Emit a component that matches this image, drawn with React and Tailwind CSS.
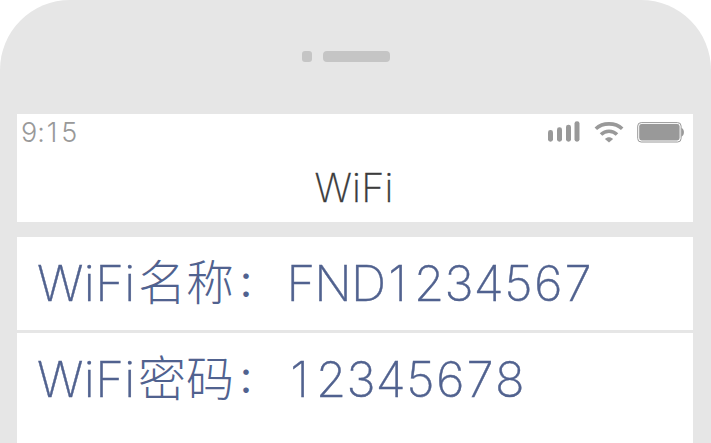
import React from "react";

const latin = "font-['Inter','Roboto',sans-serif]";
const cjk = "font-['Noto_Sans_CJK_SC',sans-serif]";

const cellWidth = {
  ":": "w-[0.27em]",
  "1": "w-[0.608em] pr-[0.07em]",
};

function Digits({ children }) {
  return (
    <span className="flex">
      {children.split("").map((c, i) => (
        <span key={i} className={`flex shrink-0 justify-center ${cellWidth[c] || "w-[0.608em]"}`}>
          {c}
        </span>
      ))}
    </span>
  );
}

function Signal() {
  return (
    <svg width="32" height="22" viewBox="0 0 32 22" fill="#999999">
      <rect x="0" y="9" width="5" height="11.7" rx="2.4" />
      <rect x="9" y="6.2" width="5" height="14.5" rx="2.4" />
      <rect x="18" y="3.7" width="5" height="17" rx="2.4" />
      <rect x="26.5" y="0.2" width="5" height="20.5" rx="2.4" />
    </svg>
  );
}

function Wifi() {
  return (
    <svg width="30" height="22" viewBox="0 0 30 22" fill="none" stroke="#999999" strokeWidth="3.6">
      <path d="M1.8 7.7C8.8 1.2 21.2 1.2 28.2 7.7" />
      <path d="M7 13.6C11.4 9.2 18.6 9.2 23 13.6" />
      <path d="M10.9 18C13.4 15.8 16.6 15.8 19.1 18L15 21.5Z" fill="#999999" stroke="none" />
    </svg>
  );
}

function Battery() {
  return (
    <svg width="48" height="22" viewBox="0 0 48 22">
      <rect x="0.7" y="1.6" width="43.4" height="19.4" rx="3.5" fill="none" stroke="#999999" strokeWidth="1" />
      <rect x="2.2" y="3.1" width="40.4" height="16.4" rx="2.4" fill="#999999" />
      <path d="M44.3 6.8C47.8 8.3 47.8 14.3 44.3 15.8Z" fill="#999999" />
    </svg>
  );
}

function Row({ label, prefix, digits }) {
  return (
    <div className="flex h-full items-center whitespace-nowrap pl-[20px] pt-[1px] text-[49px] leading-[60px] text-[#51628f]">
      <span className={`${latin} w-[101px] font-extralight tracking-[0.4px] [-webkit-text-stroke:0.4px]`}>WiFi</span>
      <span className={`${cjk} w-[97px] pb-[10px] text-[48px] font-light`}>{label}</span>
      <span className={`${cjk} w-[51.5px] pb-[7px] pl-[2px] text-[36px] font-normal`}>：</span>
      {prefix && (
        <span className={`${latin} w-[98px] font-extralight tracking-[-0.9px] [-webkit-text-stroke:0.4px]`}>
          {prefix}
        </span>
      )}
      <span className={`${latin} font-extralight [-webkit-text-stroke:0.4px]`}>
        <Digits>{digits}</Digits>
      </span>
    </div>
  );
}

export default function App() {
  return (
    <div className="h-[443px] w-[711px] overflow-hidden bg-white">
      <div className="flex h-full flex-col rounded-t-[70px] bg-[#e6e6e6] pl-[17px] pr-[18px]">
        <div className="flex h-[114px] shrink-0 gap-[11px] pl-[285px] pt-[51px]">
          <div className="h-[11px] w-[10px] rounded-[3px] bg-[#c5c5c5]" />
          <div className="h-[11px] w-[67px] rounded-[4px] bg-[#c5c5c5]" />
        </div>
        <div className="h-[108px] shrink-0 bg-white">
          <div className="flex h-[36px] items-center justify-between pl-[4px] pr-[8px]">
            <span className={`${latin} pt-[2px] text-[27px] font-light text-[#999999]`}>
              <Digits>9:15</Digits>
            </span>
            <div className="flex items-center gap-[13.5px]">
              <Signal />
              <Wifi />
              <Battery />
            </div>
          </div>
          <div className={`${latin} pr-[2px] text-center text-[39.5px] font-extralight leading-[77px] tracking-[0.2px] text-[#3c3c3c] [-webkit-text-stroke:0.3px]`}>
            WiFi
          </div>
        </div>
        <div className="mt-[15px] h-[93px] shrink-0 bg-white">
          <Row label="名称" prefix="FND" digits="1234567" />
        </div>
        <div className="mt-[3px] h-[110px] shrink-0 bg-white">
          <div className="h-[93px]">
            <Row label="密码" digits="12345678" />
          </div>
        </div>
      </div>
    </div>
  );
}
